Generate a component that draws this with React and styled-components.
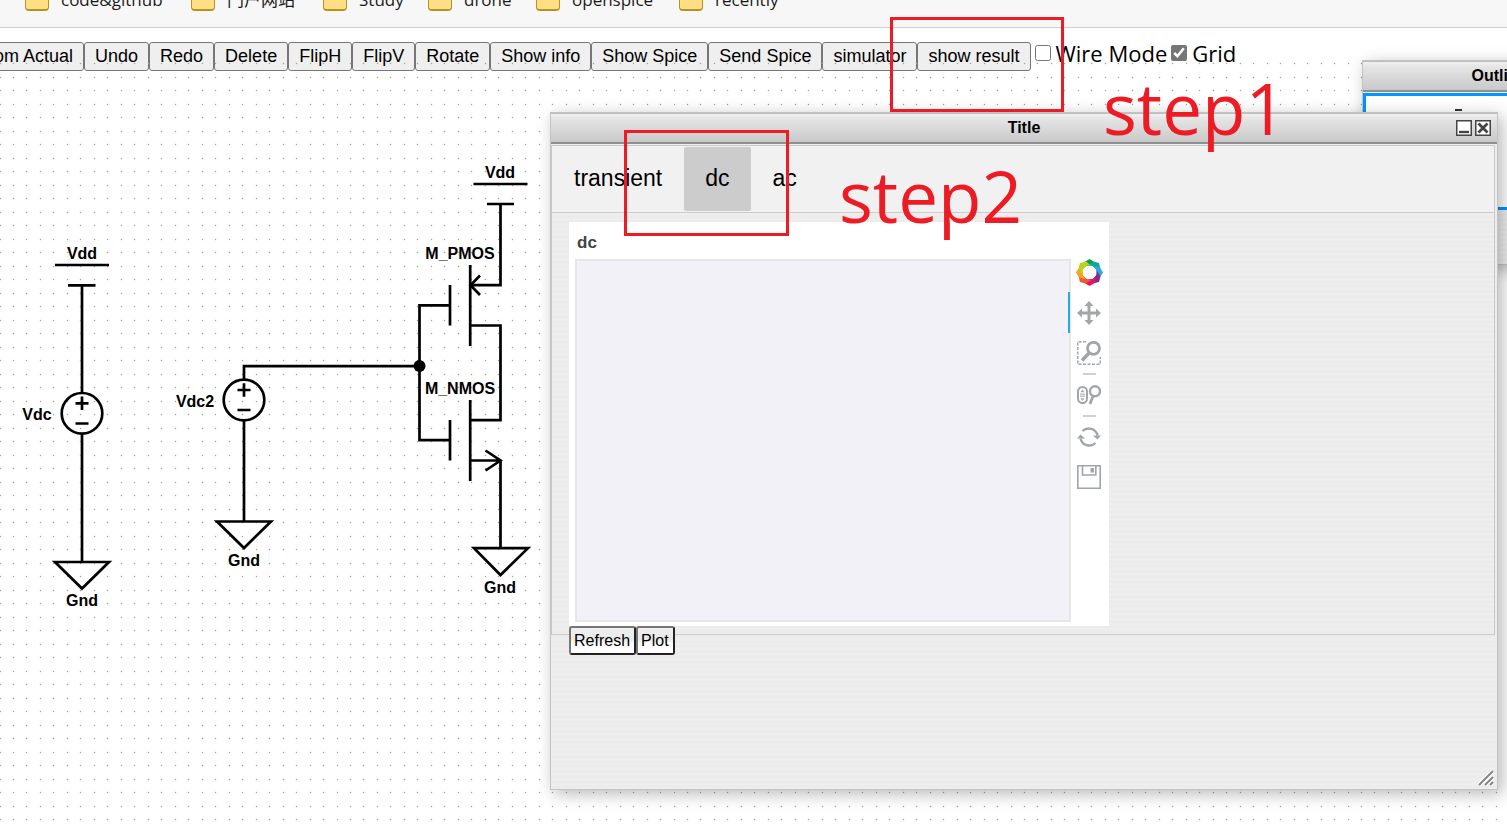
import React from "react";
import styled, { createGlobalStyle, css } from "styled-components";

const UI = `"Liberation Sans", Arial, sans-serif`;
const HUMAN = `"Open Sans", "Noto Sans CJK SC", sans-serif`;
const RED = "#ed1c24";

const GlobalStyle = createGlobalStyle`
  * { box-sizing: border-box; }
  body { margin: 0; background: #fff; color: #000; font-family: ${UI}; }
  button, input { font: inherit; color: inherit; margin: 0; }
`;

const Page = styled.div`
  position: relative;
  display: flex;
  flex-direction: column;
  min-height: 100vh;
  overflow: hidden;
`;

const BookmarkBar = styled.nav`
  display: flex;
  align-items: flex-end;
  height: 28px;
  padding: 0 0 15px 25px;
  background: #f7f7f7;
  border-bottom: 1px solid #cfcfcf;
`;

const Bookmark = styled.a`
  display: flex;
  align-items: flex-end;
  gap: 12px;
  flex: none;
  width: ${(p) => p.$width}px;
  color: #1b1b1b;
  font: 17px/24px ${HUMAN};
  text-decoration: none;
  white-space: nowrap;
`;

const Folder = styled.span`
  flex: none;
  width: 24px;
  height: 20px;
  margin-bottom: 1px;
  background: #ffdf85;
  border: 1px solid #b8921e;
  border-bottom-width: 2px;
  border-radius: 4px;
`;

const Toolbar = styled.div`
  display: flex;
  align-items: flex-start;
  margin: 14px 0 0 -38px;
`;

const ToolButton = styled.button`
  flex: none;
  height: 29px;
  padding: 0 10px 2px;
  background: #efefef;
  border: 1px solid #767676;
  border-radius: 3px;
  font-size: 18px;
  line-height: 24px;
  white-space: nowrap;
`;

const Option = styled.label`
  display: flex;
  align-items: center;
  gap: 5px;
  height: 22px;
  margin-left: 4px;
  font: 22px/22px ${HUMAN};
  white-space: nowrap;
`;

const Tick = styled.input`
  width: 16px;
  height: 16px;
  accent-color: #767676;
`;

const Canvas = styled.svg`
  position: absolute;
  inset: 0;
  width: 100%;
  height: 100%;
  pointer-events: none;
`;

const Frame = styled.section`
  position: absolute;
  left: ${(p) => p.$x}px;
  top: ${(p) => p.$y}px;
  width: ${(p) => p.$w}px;
  height: ${(p) => p.$h}px;
  display: flex;
  flex-direction: column;
  border: 1px solid #c3c3c3;
  background: repeating-linear-gradient(#eeeeee 0 2px, #ebebeb 3px 5px);
  box-shadow: 4px 4px 16px rgba(0, 0, 0, 0.28);
`;

const TitleBar = styled.header`
  display: grid;
  grid-template-columns: 1fr auto 1fr;
  align-items: center;
  flex: none;
  height: 31px;
  padding: 0 6px;
  border-top: 1px solid #bdbdbd;
  border-bottom: 2px solid #8f8f8f;
  background: linear-gradient(#f0f0f0, #e4e4e4 20%, #c9c9c9);
`;

const Title = styled.h2`
  grid-column: 2;
  margin: 0;
  font-size: 16px;
  line-height: 24px;
`;

const TitleActions = styled.div`
  display: flex;
  justify-content: flex-end;
  gap: 3px;
`;

const IconButton = styled.button`
  display: flex;
  padding: 0;
  border: 0;
  background: none;
`;

const OutlineView = styled.div`
  flex: none;
  height: 117px;
  margin-top: 1px;
  padding: 13px 0 0 89px;
  border: 3px solid #0095ff;
  background: #fff;
`;

const OutlineMark = styled.div`
  width: 7px;
  height: 2px;
  background: #333;
`;

const Tabs = styled.div`
  flex: none;
  height: 490px;
  margin: 1px 2px 0 0;
  border: 1px solid #c9c9c9;
`;

const TabList = styled.div`
  display: flex;
  gap: 1px;
  height: 67px;
  padding: 1px 0 0 1px;
  background: #f1f1f1;
  border-bottom: 1px solid #ccc;
`;

const Tab = styled.button`
  height: 64px;
  padding: 0 21px 2px;
  border: 0;
  border-radius: 2px;
  background: ${(p) => (p.$active ? "#ccc" : "transparent")};
  font-size: 23px;
  line-height: 60px;
`;

const TabPanel = styled.div`
  padding: 9px 17px 0;
`;

const Chart = styled.figure`
  width: 540px;
  height: 404px;
  margin: 0;
  padding: 9px 0 0 6px;
  background: #fff;
`;

const ChartTitle = styled.figcaption`
  padding-left: 2px;
  color: #444;
  font-size: 17px;
  font-weight: bold;
  line-height: 24px;
  height: 28px;
`;

const ChartBody = styled.div`
  display: flex;
`;

const Plot = styled.div`
  flex: 1;
  height: 363px;
  border: 2px solid #e6e6e6;
  background: #f2f1f7;
`;

const PlotTools = styled.div`
  display: flex;
  flex-direction: column;
  align-items: center;
  width: 38px;
  padding-right: 2px;
`;

const LogoLink = styled.a`
  display: flex;
  margin-bottom: 7px;
`;

const PlotTool = styled(IconButton)`
  position: relative;
  width: 100%;
  height: 40px;
  align-items: center;
  justify-content: center;
  ${(p) =>
    p.$active &&
    css`
      &::before {
        content: "";
        position: absolute;
        left: -3px;
        top: -1px;
        width: 2px;
        height: 41px;
        background: #26aae1;
      }
    `}
`;

const Divider = styled.span`
  width: 13px;
  height: 2px;
  background: #d0d0d0;
`;

const Actions = styled.div`
  display: flex;
`;

const ActionButton = styled.button`
  height: 29px;
  padding: 0 4px 0 3px;
  background: linear-gradient(#efefef, #e9e9e9 45%, #ffffff 65%);
  border: 2px solid;
  border-color: #767676 #222 #222 #767676;
  border-radius: 3px;
  font-size: 16px;
  line-height: 24px;
`;

const Grip = styled.svg`
  align-self: flex-end;
  margin: auto 3px 3px 0;
`;

const Mark = styled.div`
  position: absolute;
  left: ${(p) => p.$x}px;
  top: ${(p) => p.$y}px;
  width: ${(p) => p.$w}px;
  height: ${(p) => p.$h}px;
  border: 3px solid ${RED};
  pointer-events: none;
`;

const Step = styled.div`
  position: absolute;
  left: ${(p) => p.$x}px;
  top: ${(p) => p.$y}px;
  color: ${RED};
  font: 500 71px/96px ${HUMAN};
  pointer-events: none;
`;

const bookmarks = [
  ["code&github", 166],
  ["门户网站", 132],
  ["Study", 105],
  ["drone", 108],
  ["openspice", 143],
  ["recently", 143],
];

const commands = [
  "Zoom Actual", "Undo", "Redo", "Delete", "FlipH", "FlipV", "Rotate",
  "Show info", "Show Spice", "Send Spice", "simulator", "show result",
];

const labels = [
  ["Vdd", 82, 259], ["Gnd", 82, 606], ["Vdc", 37, 420], ["Vdc2", 195, 407],
  ["Gnd", 244, 566], ["Vdd", 500, 178], ["M_PMOS", 460, 259],
  ["M_NMOS", 460, 394], ["Gnd", 500, 593],
];

// 25 grid steps span 337px, two rows span 27px
const gridDots = [];
for (let i = 0; i < 25; i++) {
  for (const y of [9, 23]) gridDots.push(`M${Math.floor(i * 13.48)} ${y}h1v1h-1z`);
}

function Schematic() {
  return (
    <Canvas aria-label="Circuit schematic">
      <defs>
        <pattern id="grid" width="337" height="27" patternUnits="userSpaceOnUse">
          <path d={gridDots.join("")} fill="#a3a394" stroke="#a3a394" strokeOpacity="0.3" strokeWidth="1" />
        </pattern>
      </defs>
      <rect y="60" width="100%" height="100%" fill="url(#grid)" />
      <g fill="none" stroke="#000" strokeWidth="2.7">
        <path d="M55 265H109M68 285.300H95.500M82 285V393M82 433V561M55 562H109L82 588.500Z" />
        <circle cx="82" cy="413.300" r="20.300" />
        <path d="M75.500 403.300H88.500M82 396.500V410M75.500 423.500H88.500" />
        <path d="M244 380V366.200H419.500M244 420V521M217 521.500H271L244 548Z" />
        <circle cx="244" cy="400" r="20.300" />
        <path d="M237.500 390H250.500M244 383.200V396.700M237.500 410H250.500" />
        <path d="M450 305.400H419.500V440.200H450M450 285V325.600M450 420V460.500M470.200 265V346M470.200 400V481" />
        <path d="M473.500 184H527.500M487 204H514M500.500 204V285.200H470.500M480 275.500L470.500 285.200L480 295" />
        <path d="M470 325.500H500.500V420.200H470M470 460.500H500.500M485.500 450.500L500.500 460.500L485.500 470.500M500.500 461V548M474 548.200H528L500.500 575Z" />
      </g>
      <circle cx="419.500" cy="366" r="6" />
      <g fontFamily={UI} fontWeight="bold" fontSize="16" textAnchor="middle">
        {labels.map(([text, x, y]) => (
          <text key={`${text}${x}${y}`} x={x} y={y}>{text}</text>
        ))}
      </g>
    </Canvas>
  );
}

const petals = ["#0a9f4c", "#12a5a0", "#2ba9e0", "#7c2f8c", "#ed1164", "#f0592a", "#fba31c", "#b9d31a"];

function Logo() {
  return (
    <svg width="27" height="27" viewBox="-13.500 -13.500 27 27">
      {petals.map((color, i) => (
        <path key={color} fill={color} d="M-5 -10.500L0 -13.500L5.500 -10L5.800 -4.500L2.500 -7L-3 -6.600L-6.500 -4.500Z" transform={`rotate(${i * 45})`} />
      ))}
    </svg>
  );
}

const PanIcon = () => (
  <svg width="24" height="24" viewBox="0 0 24 24" fill="#a1a6a9">
    <path d="M12 0L16.500 5H13.500V10.500H19V7.500L24 12L19 16.500V13.500H13.500V19H16.500L12 24L7.500 19H10.500V13.500H5V16.500L0 12L5 7.500V10.500H10.500V5H7.500Z" />
  </svg>
);

const BoxZoomIcon = () => (
  <svg width="24" height="24" viewBox="0 0 24 24" fill="none" stroke="#a1a6a9">
    <path d="M9 .75H.75V23.250H23.250V16" strokeWidth="1.500" strokeDasharray="3 1.500" />
    <circle cx="16.500" cy="7.300" r="6" strokeWidth="2.800" />
    <path d="M12.500 11.500L5 19.500" strokeWidth="3.400" />
  </svg>
);

const WheelZoomIcon = () => (
  <svg width="24" height="20" viewBox="0 0 24 20" fill="none" stroke="#a1a6a9">
    <rect x="1" y="2" width="9" height="16" rx="4.500" strokeWidth="2" />
    <path d="M3 9.200H8M3 11.200H8" strokeWidth="1" />
    <path d="M5.500 4.500L7.500 7.200H3.500ZM5.500 16L7.500 13.200H3.500Z" fill="#a1a6a9" stroke="none" />
    <circle cx="18" cy="6.300" r="5" strokeWidth="2.400" />
    <path d="M16 11L13 19" strokeWidth="2.800" />
  </svg>
);

const ResetIcon = () => (
  <svg width="24" height="24" viewBox="0 0 24 24" fill="none" stroke="#a1a6a9" strokeWidth="2.400">
    <path d="M5.500 6A9 9 0 0 1 20.500 10.500M18.500 18A9 9 0 0 1 3.500 13.500" />
    <path d="M16 10.500H24L20.500 14.500ZM0 13.500H8L3.500 9.500Z" fill="#a1a6a9" stroke="none" />
  </svg>
);

const SaveIcon = () => (
  <svg width="24" height="24" viewBox="0 0 24 24" fill="none" stroke="#a1a6a9" strokeWidth="1.600">
    <path d="M.8 .8H23.200V23.200H.8ZM5.500 .8V10H18.800V.8" />
    <path d="M13.500 3H17V7.500H13.500Z" fill="#a1a6a9" stroke="none" />
  </svg>
);

function ResultWindow() {
  return (
    <Frame $x={550} $y={112} $w={948} $h={678}>
      <TitleBar>
        <Title>Title</Title>
        <TitleActions>
          <IconButton aria-label="Minimize">
            <svg width="16" height="16" fill="#fff" stroke="#454545">
              <path d="M.75 .75H15.250V15.250H.75Z" strokeWidth="1.500" />
              <path d="M3 12H13" strokeWidth="2.400" />
            </svg>
          </IconButton>
          <IconButton aria-label="Close">
            <svg width="16" height="16" fill="#fff" stroke="#454545">
              <path d="M.75 .75H15.250V15.250H.75Z" strokeWidth="1.500" />
              <path d="M3.500 3.500L12.500 12.500M12.500 3.500L3.500 12.500" strokeWidth="2.800" />
            </svg>
          </IconButton>
        </TitleActions>
      </TitleBar>
      <Tabs>
        <TabList role="tablist">
          <Tab role="tab" aria-selected={false}>transient</Tab>
          <Tab role="tab" aria-selected $active>dc</Tab>
          <Tab role="tab" aria-selected={false}>ac</Tab>
        </TabList>
        <TabPanel role="tabpanel">
          <Chart>
            <ChartTitle>dc</ChartTitle>
            <ChartBody>
              <Plot />
              <PlotTools>
                <LogoLink href="#bokeh" aria-label="Bokeh"><Logo /></LogoLink>
                <PlotTool aria-label="Pan" $active><PanIcon /></PlotTool>
                <PlotTool aria-label="Box zoom"><BoxZoomIcon /></PlotTool>
                <Divider />
                <PlotTool aria-label="Wheel zoom"><WheelZoomIcon /></PlotTool>
                <Divider />
                <PlotTool aria-label="Reset"><ResetIcon /></PlotTool>
                <PlotTool aria-label="Save"><SaveIcon /></PlotTool>
              </PlotTools>
            </ChartBody>
          </Chart>
          <Actions>
            <ActionButton>Refresh</ActionButton>
            <ActionButton>Plot</ActionButton>
          </Actions>
        </TabPanel>
      </Tabs>
      <Grip width="17" height="17" fill="none">
        <path d="M2 16L16 2M8 16L16 8M13 16L16 13" stroke="#fff" strokeWidth="4" />
        <path d="M2 16L16 2M8 16L16 8M13 16L16 13" stroke="#858585" strokeWidth="2" />
      </Grip>
    </Frame>
  );
}

export default function App() {
  return (
    <Page>
      <GlobalStyle />
      <BookmarkBar>
        {bookmarks.map(([name, width]) => (
          <Bookmark key={name} href="#bookmark" $width={width}>
            <Folder />
            {name}
          </Bookmark>
        ))}
      </BookmarkBar>
      <Toolbar>
        {commands.map((name) => (
          <ToolButton key={name}>{name}</ToolButton>
        ))}
        <Option><Tick type="checkbox" />Wire Mode</Option>
        <Option><Tick type="checkbox" defaultChecked />Grid</Option>
      </Toolbar>
      <Schematic />
      <Frame $x={1362} $y={60} $w={274} $h={205}>
        <TitleBar><Title>Outline</Title></TitleBar>
        <OutlineView><OutlineMark /></OutlineView>
      </Frame>
      <ResultWindow />
      <Mark $x={890} $y={17} $w={174} $h={95} />
      <Mark $x={624} $y={130} $w={165} $h={106} />
      <Step $x={1103} $y={60}>step1</Step>
      <Step $x={839} $y={148}>step2</Step>
    </Page>
  );
}
